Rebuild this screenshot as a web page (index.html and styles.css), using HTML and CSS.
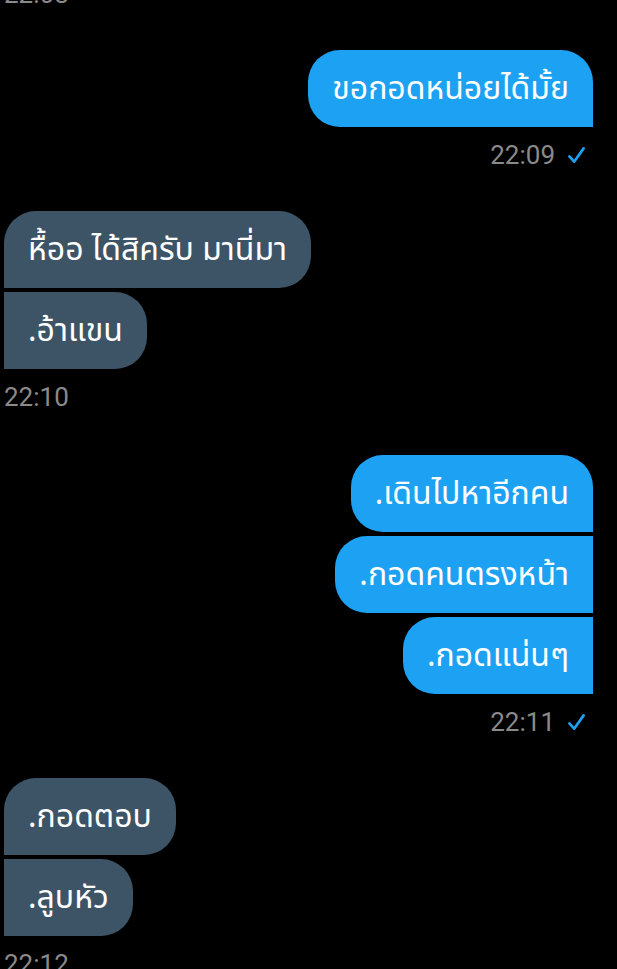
FILE: index.html
```html
<!DOCTYPE html>
<html lang="th">
<head>
<meta charset="utf-8">
<link rel="stylesheet" href="styles.css">
</head>
<body>
<div class="chat">
  <div class="time left first">22:08</div>

  <div class="group sent">
    <div class="bubble">ขอกอดหน่อยได้มั้ย</div>
  </div>
  <div class="time right">22:09 <svg class="check" viewBox="0 0 20 20"><path d="M2.5 11 L7.5 16.5 L17.5 2.5"/></svg></div>

  <div class="group recv">
    <div class="bubble">หื้ออ ได้สิครับ มานี่มา</div>
    <div class="bubble">.อ้าแขน</div>
  </div>
  <div class="time left mid">22:10</div>

  <div class="group sent">
    <div class="bubble">.เดินไปหาอีกคน</div>
    <div class="bubble">.กอดคนตรงหน้า</div>
    <div class="bubble">.กอดแน่นๆ</div>
  </div>
  <div class="time right">22:11 <svg class="check" viewBox="0 0 20 20"><path d="M2.5 11 L7.5 16.5 L17.5 2.5"/></svg></div>

  <div class="group recv">
    <div class="bubble">.กอดตอบ</div>
    <div class="bubble">.ลูบหัว</div>
  </div>
  <div class="time left">22:12</div>
</div>
</body>
</html>
```

FILE: styles.css
```css
html, body {
  margin: 0;
  padding: 0;
  background: #000;
  height: 100%;
  overflow: hidden;
}
.chat {
  display: flex;
  flex-direction: column;
  padding: 0 24px 0 4px;
  margin-top: -20px;
  font-family: "Noto Sans Thai", "Noto Sans", Roboto, "DejaVu Sans", sans-serif;
}
.group {
  display: flex;
  flex-direction: column;
  gap: 4px;
}
.group.sent { align-items: flex-end; }
.group.recv { align-items: flex-start; }
.bubble {
  height: 77px;
  box-sizing: border-box;
  padding: 0 24px;
  display: flex;
  align-items: center;
  font-size: 32px;
  color: #fff;
  border-radius: 32px;
  white-space: nowrap;
}
.sent .bubble { background: #1da1f2; }
.recv .bubble { background: #3d5466; }
.sent .bubble { border-bottom-right-radius: 0; border-top-right-radius: 0; }
.sent .bubble:first-child { border-top-right-radius: 32px; }
.recv .bubble { border-bottom-left-radius: 0; border-top-left-radius: 0; }
.recv .bubble:first-child { border-top-left-radius: 32px; }
.time {
  font-family: Roboto, "Liberation Sans", sans-serif;
  font-size: 26px;
  line-height: 28px;
  color: #8a8a8a;
  margin: 14px 0 42px;
  display: flex;
  align-items: center;
  gap: 12px;
}
.time.first { margin-top: 0; }
.time.mid { margin: 14px 0 44px; }
.time.right { justify-content: flex-end; padding-right: 7px; }
.check {
  width: 19px;
  height: 19px;
  fill: none;
  stroke: #1da1f2;
  stroke-width: 2.8;
  stroke-linecap: round;
  stroke-linejoin: round;
}
```
